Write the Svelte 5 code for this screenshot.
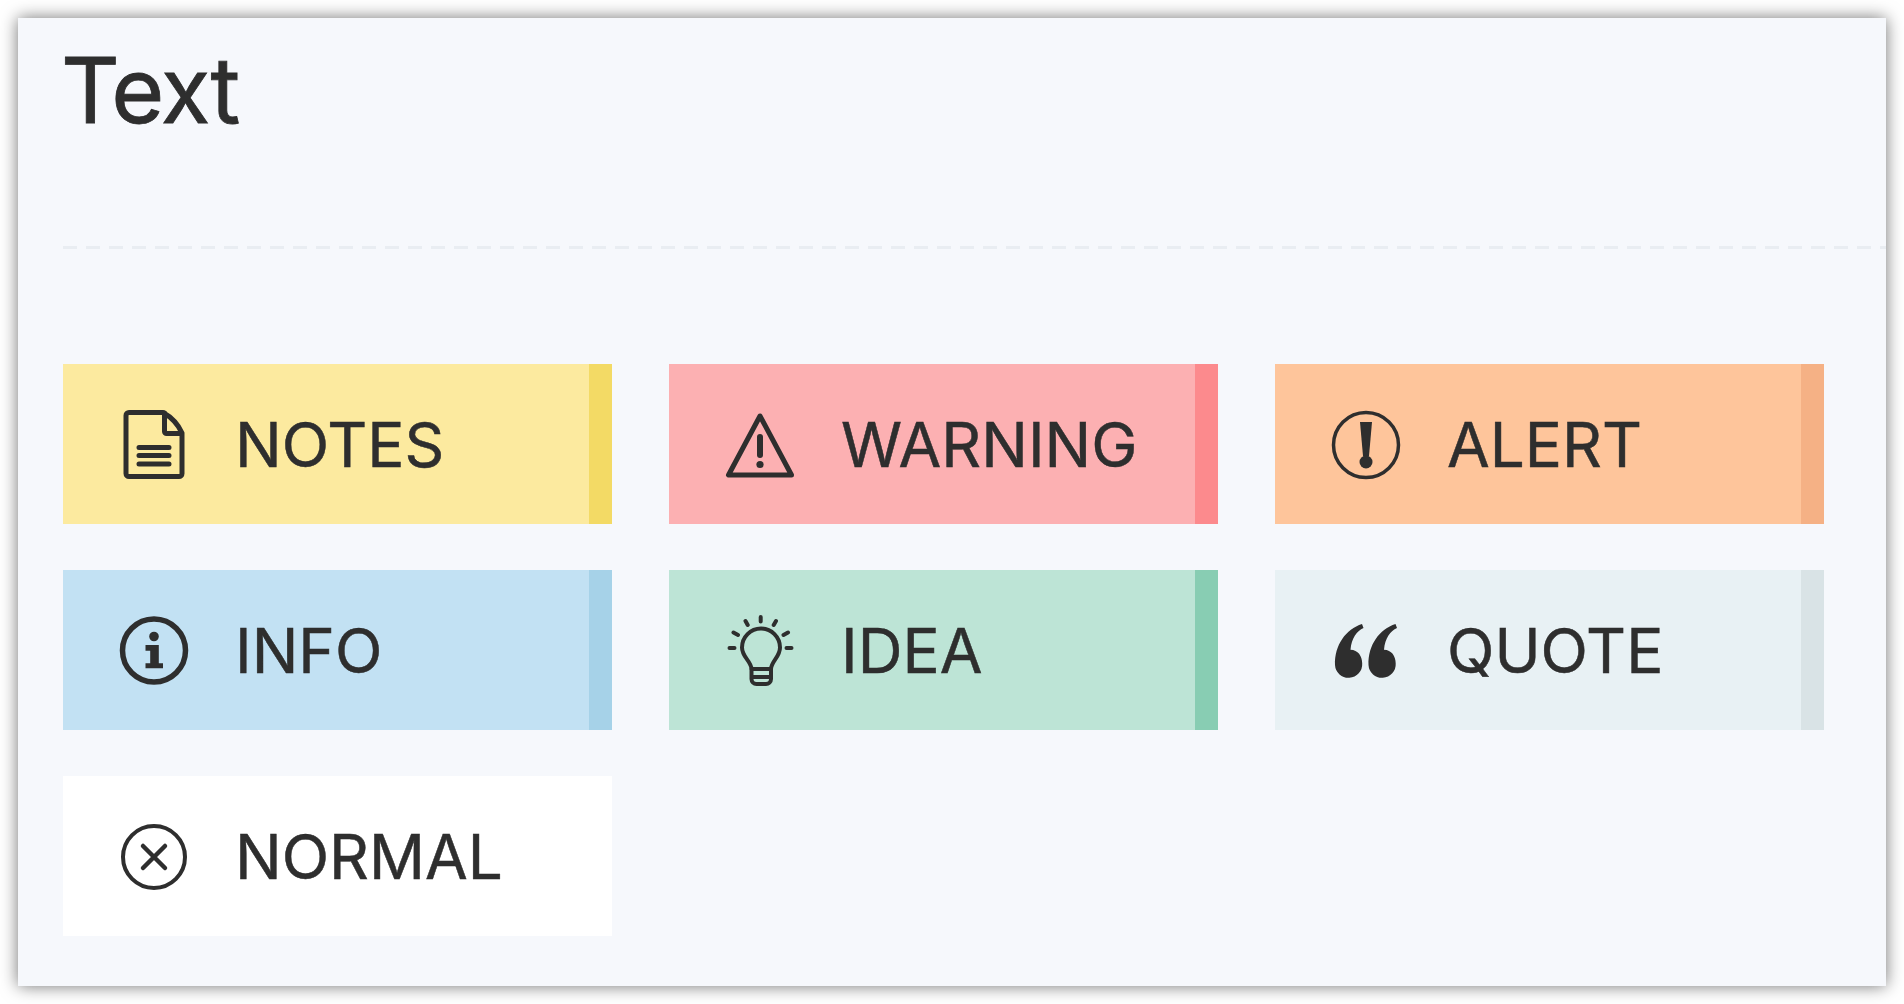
<script>
  const notes = [
    { name: 'NOTES', kind: 'notes' },
    { name: 'WARNING', kind: 'warning' },
    { name: 'ALERT', kind: 'alert' },
    { name: 'INFO', kind: 'info' },
    { name: 'IDEA', kind: 'idea' },
    { name: 'QUOTE', kind: 'quote' },
    { name: 'NORMAL', kind: 'normal' }
  ];
</script>

<div class="panel">
  <h1>Text</h1>
  <div class="divider"></div>
  <div class="grid">
    {#each notes as note}
      <div class="card {note.kind}">
        <svg class="icon" viewBox="0 0 72 72" width="72" height="72" fill="none" stroke="#2e2e2e" stroke-linecap="round" stroke-linejoin="round">
          {#if note.kind === 'notes'}
            <path stroke-width="5" d="M45 3.5H11a3 3 0 0 0-3 3v58a3 3 0 0 0 3 3h50a3 3 0 0 0 3-3V24C60 15 53 8 45 3.5Z" />
            <path stroke-width="5" d="M46.5 4V22.5a2 2 0 0 0 2 2H63" />
            <path stroke-width="5" d="M21 38.5H51M21 46.5H51M21 55H51" />
          {:else if note.kind === 'warning'}
            <path stroke-width="5" d="M36 7 4.5 66H67.5Z" />
            <path stroke-width="6" d="M36 28V46" />
            <circle cx="36" cy="55.5" r="3.6" fill="#2e2e2e" stroke="none" />
          {:else if note.kind === 'alert'}
            <circle cx="36" cy="36" r="32.5" stroke-width="3.5" />
            <path fill="#2e2e2e" stroke="none" d="M30 13H42L39 47H33Z" />
            <circle cx="36" cy="53" r="6.5" fill="#2e2e2e" stroke="none" />
          {:else if note.kind === 'info'}
            <circle cx="36" cy="35.5" r="31.5" stroke-width="5.5" />
            <circle cx="36" cy="21.5" r="4.8" fill="#2e2e2e" stroke="none" />
            <path fill="#2e2e2e" stroke="none" d="M27.5 30H40.8V48.3H45V53.3H27.5V48.3H32.2V35.7H27.5Z" />
          {:else if note.kind === 'idea'}
            <path stroke-width="4" d="M27.5 54C27 46 18 42 18 32.5a19 19 0 0 1 38 0C56 42 47.5 46 47 54Z" />
            <path stroke-width="4" d="M27.5 54V64a5 5 0 0 0 5 5H42a5 5 0 0 0 5-5V54M27.5 62H47" />
            <path stroke-width="4" d="M36.7 2V6.5M21.5 6 23.7 10M9.5 17.5 14 20M5.5 33H10.5M52 6 49.7 10M64 17.5 59.5 20M62.5 33H67.5" />
          {:else if note.kind === 'quote'}
            <path fill="#2e2e2e" stroke="none" d="M32 9 33.5 13C27 16 21.5 23 20.5 34.8C28 35 32.2 41 32.2 48.5A13.5 13.5 0 0 1 5 50C4.4 30 16 14 32 9Z" />
            <path fill="#2e2e2e" stroke="none" d="M65.5 9 67 13C60.5 16 55 23 54 34.8C61.5 35 65.7 41 65.7 48.5A13.5 13.5 0 0 1 38.5 50C37.9 30 49.5 14 65.5 9Z" />
          {:else}
            <circle cx="36" cy="36" r="31" stroke-width="4" />
            <path stroke-width="4.5" d="M25 25 47 47M47 25 25 47" />
          {/if}
        </svg>
        <span class="name">{note.name}</span>
      </div>
    {/each}
  </div>
</div>

<style>
  :global(body) {
    margin: 0;
    background: #fff;
  }

  .panel {
    box-sizing: border-box;
    width: 1868px;
    height: 968px;
    margin: 18px;
    padding: 0 0 0 45px;
    background: #f6f8fc;
    box-shadow: 0 0 16px rgba(0, 0, 0, 0.55);
    color: #2e2e2e;
    font-family: "Inter", "Liberation Sans", sans-serif;
  }

  h1 {
    margin: 0 0 0 -2px;
    padding-top: 19px;
    font-size: 91px;
    font-weight: 400;
    letter-spacing: -1.5px;
    line-height: 106px;
    -webkit-text-stroke: 0.8px #2e2e2e;
  }

  .divider {
    height: 3px;
    margin-top: 103px;
    background: repeating-linear-gradient(90deg, #e9edf2 0 14px, transparent 14px 23px);
  }

  .grid {
    display: grid;
    grid-template-columns: repeat(3, 549px);
    column-gap: 57px;
    row-gap: 46px;
    margin-top: 115px;
  }

  .card {
    box-sizing: border-box;
    display: flex;
    align-items: center;
    height: 160px;
    padding-top: 2px;
    padding-left: 55px;
    border-right: 23px solid transparent;
  }

  .icon {
    flex: none;
    margin-right: 45px;
  }

  .name {
    font-size: 62px;
    line-height: 1;
    -webkit-text-stroke: 0.5px #2e2e2e;
  }

  .notes { background: #fcea9f; border-right-color: #f3da65; }
  .warning { background: #fcb0b2; border-right-color: #fc8a8d; }
  .alert { background: #fec59b; border-right-color: #f5b185; }
  .info { background: #c2e1f3; border-right-color: #a6d2e8; }
  .idea { background: #bde4d6; border-right-color: #88cdb3; }
  .quote { background: #e8f1f4; border-right-color: #d9e3e6; }
  .normal { background: #fff; border-right-color: #fff; }
</style>
